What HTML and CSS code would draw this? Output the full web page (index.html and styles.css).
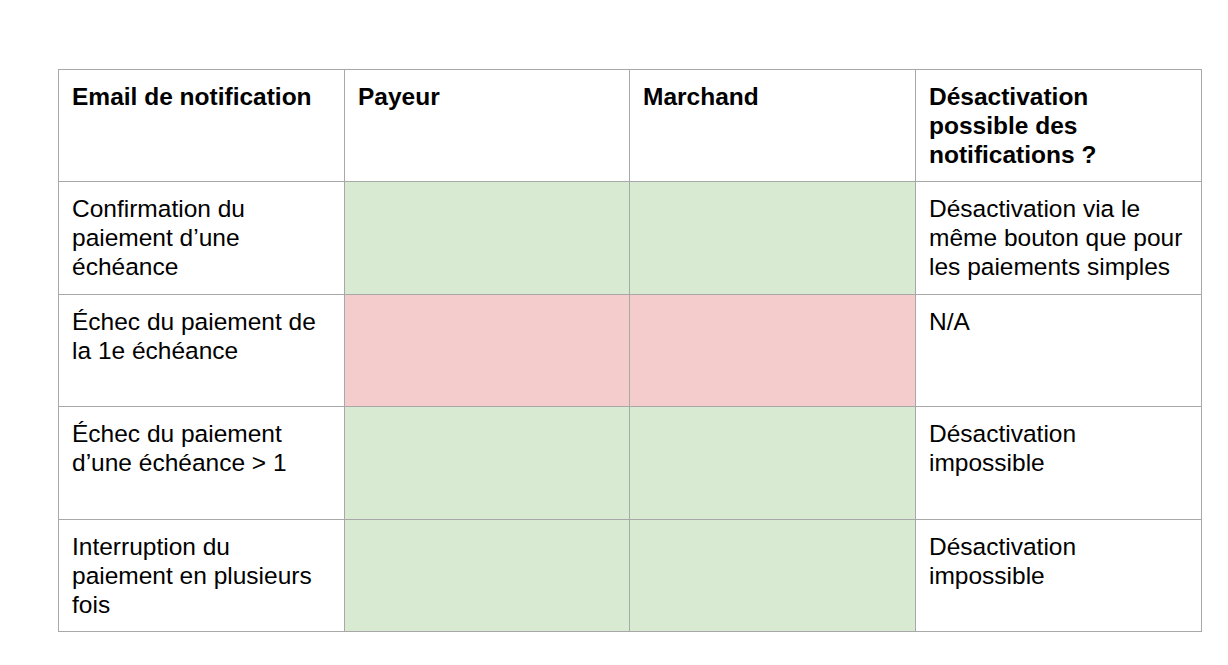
FILE: index.html
```html
<!DOCTYPE html>
<html lang="fr">
<head>
<meta charset="utf-8">
<title>Notifications</title>
<link rel="stylesheet" href="styles.css">
</head>
<body>
<div class="page">
  <table class="notif">
    <colgroup>
      <col class="c1"><col class="c2"><col class="c3"><col class="c4">
    </colgroup>
    <tr>
      <th>Email de notification</th>
      <th>Payeur</th>
      <th>Marchand</th>
      <th>Désactivation possible des notifications ?</th>
    </tr>
    <tr>
      <td>Confirmation du paiement d’une échéance</td>
      <td class="ok"></td>
      <td class="ok"></td>
      <td>Désactivation via le même bouton que pour les paiements simples</td>
    </tr>
    <tr>
      <td>Échec du paiement de la 1e échéance</td>
      <td class="ko"></td>
      <td class="ko"></td>
      <td>N/A</td>
    </tr>
    <tr>
      <td>Échec du paiement d’une échéance &gt; 1</td>
      <td class="ok"></td>
      <td class="ok"></td>
      <td>Désactivation impossible</td>
    </tr>
    <tr>
      <td>Interruption du paiement en plusieurs fois</td>
      <td class="ok"></td>
      <td class="ok"></td>
      <td>Désactivation impossible</td>
    </tr>
  </table>
</div>
</body>
</html>
```
FILE: styles.css
```css
html, body {
  margin: 0;
  padding: 0;
  background: #ffffff;
}
.page {
  padding: 69px 0 0 58px;
}
.notif {
  border-collapse: collapse;
  table-layout: fixed;
  width: 1143px;
  font-family: "Liberation Sans", Arial, sans-serif;
  font-size: 24.5px;
  line-height: 29px;
  color: #000;
}
.notif col.c1 { width: 286px; }
.notif col.c2 { width: 285px; }
.notif col.c3 { width: 286px; }
.notif col.c4 { width: 286px; }
.notif tr {
  height: 112.4px;
}
.notif th,
.notif td {
  border: 1px solid #a8a8a8;
  padding: 12px 13px 12px 13px;
  vertical-align: top;
  text-align: left;
}
.notif th {
  font-weight: bold;
}
.notif td.ok {
  background: #d9ead3;
}
.notif td.ko {
  background: #f4cccc;
}
```
